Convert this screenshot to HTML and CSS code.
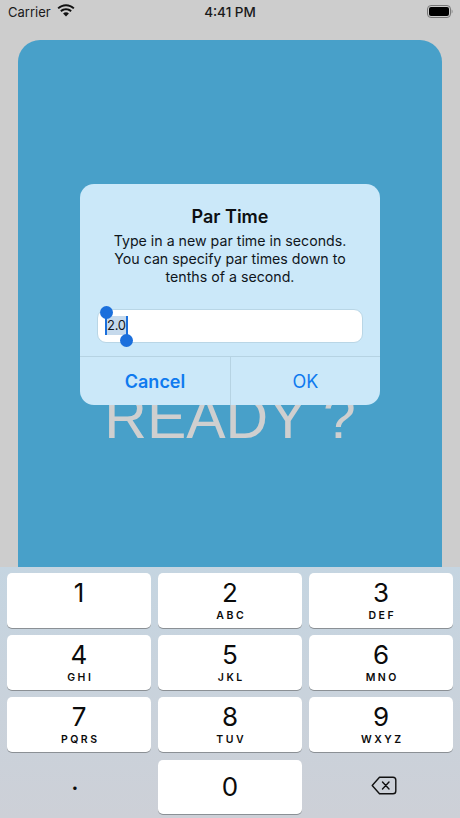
FILE: index.html
```html
<!DOCTYPE html>
<html lang="en">
<head>
<meta charset="utf-8">
<title>Par Time</title>
<link rel="stylesheet" href="styles.css">
</head>
<body>
<div class="screen">
  <header class="status">
    <div class="status-left">
      <span>Carrier</span>
      <svg class="wifi" viewBox="0 0 18 14" width="18" height="14"><path d="M9 2.200c2.800 0 5.300 1.100 7.200 2.900l1.300-1.400C15.200 1.500 12.300 .2 9 .2S2.800 1.500.5 3.700l1.300 1.400C3.700 3.300 6.200 2.200 9 2.200z" fill="#111"/><path d="M9 6.200c1.700 0 3.200.7 4.400 1.700l1.400-1.400C13.200 5 11.200 4.200 9 4.200S4.800 5 3.200 6.500l1.400 1.400C5.800 6.900 7.300 6.200 9 6.200z" fill="#111"/><path d="M9 8.200c-1.100 0-2.100.4-2.900 1.200L9 12.400l2.900-3c-.8-.8-1.800-1.200-2.900-1.200z" fill="#111"/></svg>
    </div>
    <div class="clock">4:41 PM</div>
    <div class="status-right">
      <svg viewBox="0 0 26 13" width="26" height="13"><rect x=".5" y=".5" width="23" height="12" rx="3.500" fill="none" stroke="#777"/><rect x="2" y="2" width="20" height="9" rx="2" fill="#000"/><path d="M24.600 4.500c.6.300 1 1 1 2s-.4 1.700-1 2z" fill="#888"/></svg>
    </div>
  </header>

  <main class="card">
    <div class="ready">READY ?</div>
  </main>

  <section class="alert">
    <div class="alert-body">
      <h1 class="alert-title">Par Time</h1>
      <p class="alert-message">Type in a new par time in seconds.<br>You can specify par times down to<br>tenths of a second.</p>
      <div class="field">
        <span class="selection">2.0</span>
        <i class="handle handle-start"></i>
        <i class="handle handle-end"></i>
      </div>
    </div>
    <div class="alert-actions">
      <div class="action action-bold">Cancel</div>
      <div class="action">OK</div>
    </div>
  </section>

  <section class="keyboard">
    <div class="key"><span class="num">1</span></div>
    <div class="key"><span class="num">2</span><span class="letters">ABC</span></div>
    <div class="key"><span class="num">3</span><span class="letters">DEF</span></div>
    <div class="key"><span class="num">4</span><span class="letters">GHI</span></div>
    <div class="key"><span class="num">5</span><span class="letters">JKL</span></div>
    <div class="key"><span class="num">6</span><span class="letters">MNO</span></div>
    <div class="key"><span class="num">7</span><span class="letters">PQRS</span></div>
    <div class="key"><span class="num">8</span><span class="letters">TUV</span></div>
    <div class="key"><span class="num">9</span><span class="letters">WXYZ</span></div>
    <div class="key key-flat key-dot"><span class="dot">.</span></div>
    <div class="key key-zero"><span class="num">0</span></div>
    <div class="key key-flat key-delete">
      <svg viewBox="0 0 26 19" width="26" height="19" fill="none" stroke="#111" stroke-width="1.400" stroke-linejoin="round" stroke-linecap="round"><path d="M8.500 1.200H22a2.800 2.800 0 0 1 2.800 2.800v11a2.800 2.800 0 0 1-2.800 2.800H8.500L1.200 9.500z"/><path d="M11.500 6l6.500 7M18 6l-6.500 7"/></svg>
    </div>
  </section>
</div>
</body>
</html>
```
FILE: styles.css
```css
* { box-sizing: border-box; }
html, body { margin: 0; padding: 0; }
body { font-family: Inter, "Liberation Sans", sans-serif; }

.screen {
  position: relative;
  width: 460px;
  height: 818px;
  background: #cdcdcd;
  display: flex;
  flex-direction: column;
  overflow: hidden;
}

.status {
  height: 40px;
  flex: none;
  display: grid;
  grid-template-columns: 1fr auto 1fr;
  align-items: start;
  padding: 3px 7px 0 8px;
  font-size: 13px;
  line-height: 18px;
  color: #1a1a1a;
}
.status-left { display: flex; align-items: center; gap: 6px; }
.wifi { margin-top: -3px; }
.clock { font-weight: 500; font-size: 13.500px; margin-left: -1px; }
.status-right { display: flex; justify-content: flex-end; padding-top: 2px; }

.card {
  flex: 1;
  margin: 0 18px;
  background: #48a0c9;
  border-radius: 22px 22px 0 0;
  display: flex;
  justify-content: center;
  padding-top: 342px;
}
.ready {
  font-family: "Liberation Sans", Arial, sans-serif;
  font-size: 59px;
  line-height: 72px;
  color: #cfcfcf;
  white-space: nowrap;
}

.alert {
  position: absolute;
  left: 80px;
  top: 184px;
  width: 300px;
  height: 221px;
  border-radius: 14px;
  background: #cbe8f9;
  display: flex;
  flex-direction: column;
  color: #10161c;
}
.alert-body { height: 172px; flex: none; padding: 21px 13px 0; text-align: center; }
.alert-title { margin: 0; font-size: 18px; line-height: 24px; font-weight: 600; color: #0c0f12; }
.alert-message { margin: 3px 0 0; font-size: 14.200px; line-height: 18px; font-weight: 400; }

.field {
  position: relative;
  height: 34px;
  margin: 23px 4px 0;
  background: #fff;
  border: 1px solid #b9d6e6;
  border-radius: 9px;
  text-align: left;
  padding-left: 7px;
  font-size: 13px;
}
.selection {
  display: inline-block;
  height: 19px;
  margin-top: 6px;
  vertical-align: top;
  border-left: 2px solid #1b6fdc;
  border-right: 2px solid #1b6fdc;
  background: #c5d9ec;
  color: #10161c;
  line-height: 19px;
  letter-spacing: -.3px;
}
.handle {
  position: absolute;
  width: 13px;
  height: 13px;
  border-radius: 50%;
  background: #1b6fdc;
}
.handle-start { left: 2px; top: -4px; }
.handle-end { left: 22px; top: 24px; }

.alert-actions {
  flex: 1;
  display: grid;
  grid-template-columns: 151px 149px;
  border-top: 1px solid #b6d3e3;
}
.action {
  display: flex;
  align-items: center;
  justify-content: center;
  font-size: 18px;
  color: #0f7aef;
}
.action-bold { font-weight: 600; border-right: 1px solid #b6d3e3; }

.keyboard {
  flex: none;
  height: 251px;
  padding: 6px 7px 0;
  background: linear-gradient(#c5d5e1, #cdd0d7);
  display: grid;
  grid-template-columns: repeat(3, 144px);
  grid-template-rows: repeat(4, 54.500px);
  column-gap: 7px;
  row-gap: 7.700px;
}
.key {
  background: #fff;
  border-radius: 5px;
  box-shadow: 0 1px 0 #8b9095;
  display: flex;
  flex-direction: column;
  align-items: center;
  color: #0b0b0b;
}
.key-flat {
  background: transparent;
  box-shadow: none;
  justify-content: center;
}
.key-dot { padding-right: 8px; }
.key-delete { padding-left: 5px; padding-bottom: 2px; }
.num { font-size: 26px; line-height: 32px; margin-top: 3.500px; font-weight: 400; }
.letters {
  font-size: 10.500px;
  line-height: 12px;
  font-weight: 600;
  letter-spacing: 2.500px;
  margin-right: -2.500px;
  margin-top: 1px;
}
.key-zero .num { margin-top: 11px; }
.dot { font-size: 24px; line-height: 24px; font-weight: 500; margin-top: -9px; }
```
